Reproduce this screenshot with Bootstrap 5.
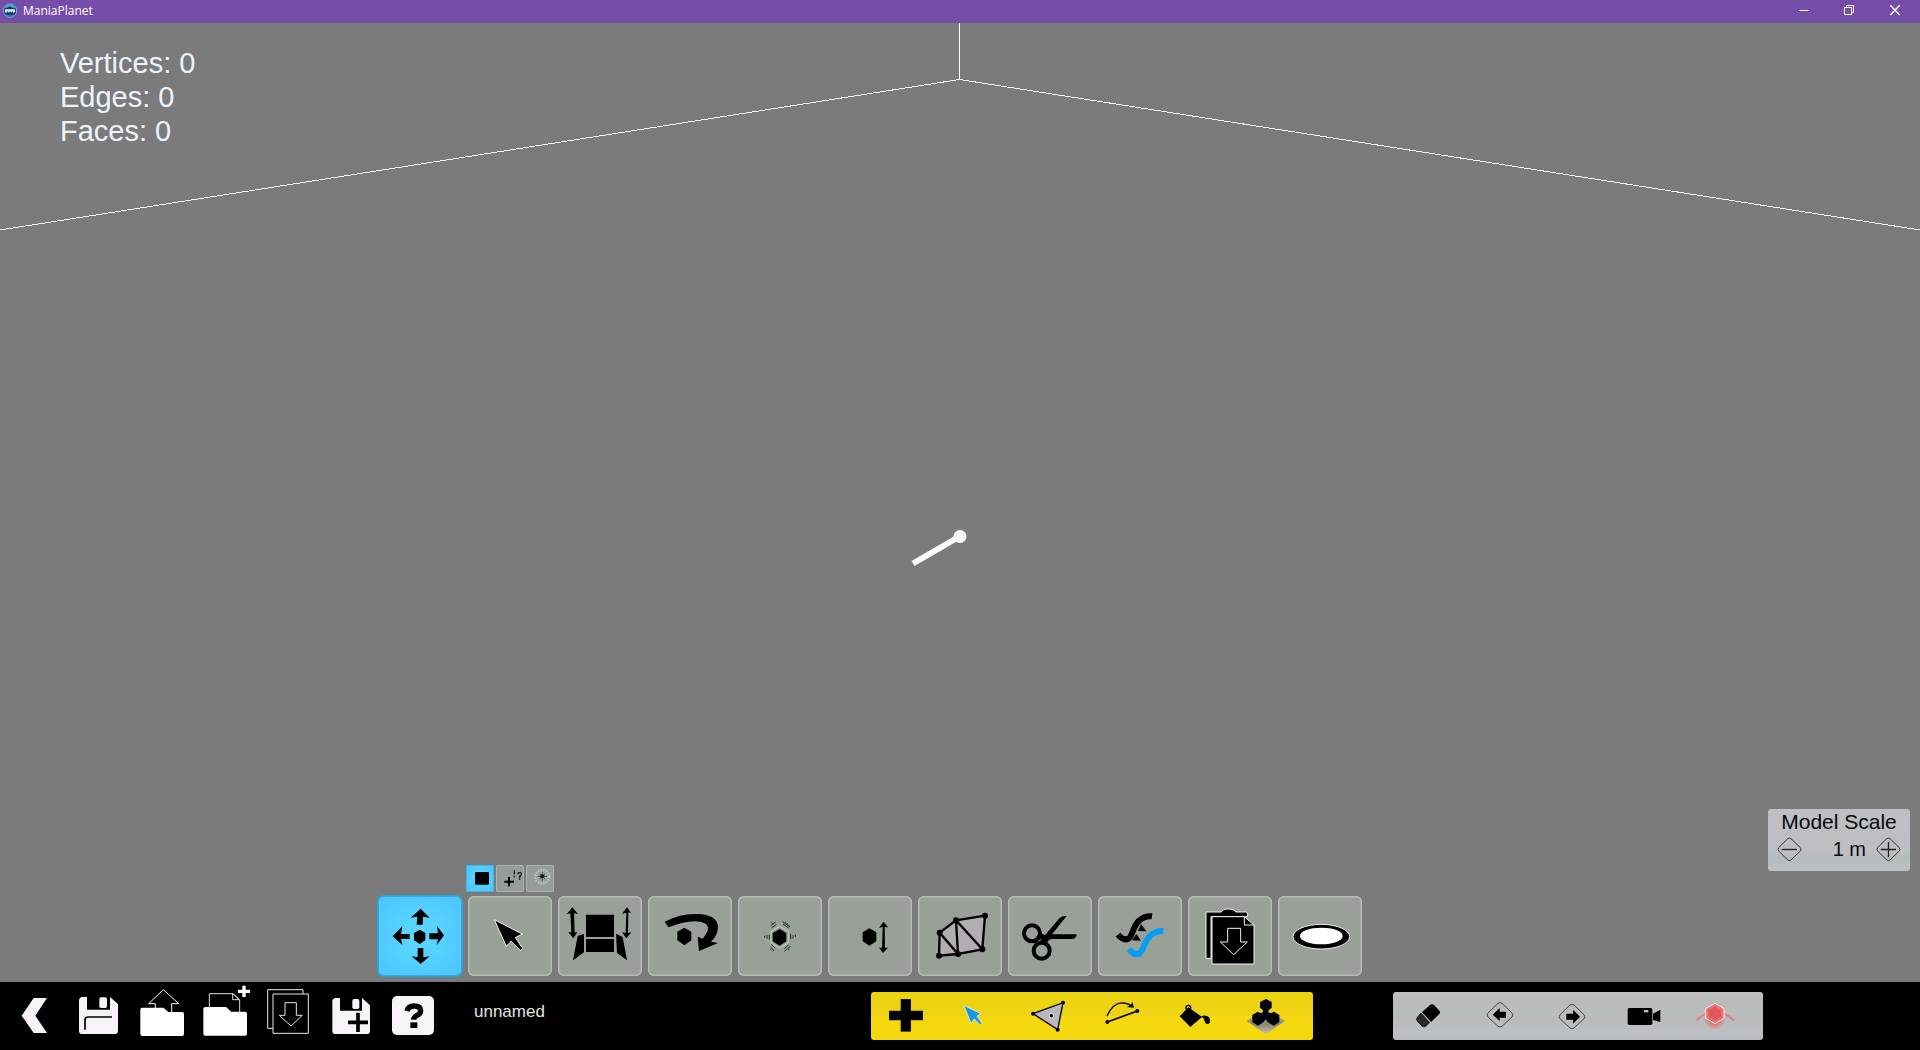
<!DOCTYPE html>
<html lang="en">
<head>
<meta charset="utf-8">
<meta name="viewport" content="width=device-width, initial-scale=1">
<title>ManiaPlanet</title>
<link href="https://cdn.jsdelivr.net/npm/bootstrap@5.3.0/dist/css/bootstrap.min.css" rel="stylesheet">
<style>
  body { font-family: "Liberation Sans", Arial, sans-serif; background: #7b7b7b; }
  svg { display: block; }
  button { color: inherit; }
  .titlebar { background: #744da9; height: 23px; font-family: "Open Sans", "Noto Sans", sans-serif; font-size: 12px; line-height: 22px; }
  .win-btn { width: 46px; height: 23px; border-radius: 0; }
  .win-btn svg { width: 46px; height: 23px; }
  .stage { background: #7b7b7b; min-height: 0; }
  .scene { z-index: 0; }
  .layer { z-index: 1; }
  .stats { padding: 23px 60px 0; font-size: 29px; line-height: 34px; color: #eef3fb; }
  .dock { padding: 0 10px 6px 378px; }
  .subtools { gap: 2px; margin: 0 0 4px 88px; }
  .sub { width: 28px; height: 27px; background: #969d97; border-radius: 2px; box-shadow: inset 0 0 0 1px #adb2ae; }
  .sub svg { width: 28px; height: 27px; }
  .tools { gap: 6px; }
  .tool { width: 84px; height: 80px; background: #98a098; border-radius: 6px; box-shadow: inset 0 0 0 1px #b4bab5, inset 0 0 0 2px #a9b0aa; }
  .tool svg { width: 84px; height: 80px; }
  .tool.active, .sub.active { background: radial-gradient(#5cd8ff, #4cc4ff); box-shadow: inset 0 0 0 1px #30a8e8, 0 0 0 1px #2ba2de; }
  .sub.active { box-shadow: inset 0 0 0 1px #3fb2f0; }
  .scale-panel { width: 142px; height: 62px; margin-bottom: 105px; border-radius: 3px; background: linear-gradient(#bebfc2, #bdbec1 72%, #b4bbbb 78%, #bcc0c3); color: #080808; }
  .scale-title { font-size: 21px; line-height: 26px; }
  .scale-row { font-size: 20px; line-height: 28px; padding: 0 9px; }
  .scale-row svg { width: 25px; height: 25px; }
  .scale-value { margin-right: 10px; }
  .bottombar { background: #000; height: 68px; }
  .files { padding-left: 3px; }
  .file-btn, .file-btn svg { width: 63px; height: 68px; }
  .docname { font-size: 17px; line-height: 24px; margin: 0 0 9px 30px; color: #e4e4e4; }
  .panels { gap: 80px; padding-right: 157px; }
  .strip { height: 48px; border-radius: 3px; }
  .strip-yellow { width: 442px; background: linear-gradient(#ebd20f, #eed414 50%, #f5d80f 51%, #f4d80e); }
  .strip-grey { width: 370px; background: linear-gradient(#c0c0c0, #bababa 24%, #b9bfbf 48%, #c0b8b9 50%, #bababc 56%, #bcc0c4 80%, #b8bdc0); }
  .strip-btn, .strip-btn svg { width: 72px; height: 48px; }
</style>
<script src="https://cdn.jsdelivr.net/npm/bootstrap@5.3.0/dist/js/bootstrap.bundle.min.js"></script>
</head>
<body>
<div class="d-flex flex-column vh-100 overflow-hidden">

  <header class="titlebar d-flex flex-shrink-0 text-white">
    <svg class="flex-shrink-0" width="23" height="23" viewBox="0 0 69 69" aria-hidden="true">
      <circle cx="30" cy="32" r="20" fill="#173f68" stroke="#7db9e6" stroke-width="3"/>
      <path d="M17 23q12-13 26 0" fill="none" stroke="#4ba4dc" stroke-width="6"/>
      <path d="M15 28h30v8l-4 3-3-6-3 5-5-4-5 4-3-5-3 6-4-3z" fill="#dcecf4"/>
      <path d="M18 44q12 9 24 0" fill="none" stroke="#3f8ac4" stroke-width="4"/>
    </svg>
    <span>ManiaPlanet</span>
    <div class="d-flex ms-auto">
      <button type="button" class="btn p-0 border-0 win-btn" aria-label="Minimize"><svg viewBox="66 0 138 69"><path d="M117 31.500h30" stroke="#fff" stroke-width="3"/></svg></button>
      <button type="button" class="btn p-0 border-0 win-btn" aria-label="Restore"><svg viewBox="204 0 138 69"><path d="M253.500 22.500h21v21h-21zM259.500 22.500v-6h21v21h-6" fill="none" stroke="#fff" stroke-width="3"/></svg></button>
      <button type="button" class="btn p-0 border-0 win-btn" aria-label="Close"><svg viewBox="342 0 138 69"><path d="M391 16l28 29M419 16l-28 29" stroke="#fff" stroke-width="4"/></svg></button>
    </div>
  </header>

  <main class="stage position-relative flex-grow-1 d-flex flex-column">
    <svg class="scene position-absolute top-0 start-0 w-100 h-100" viewBox="0 0 1920 959" preserveAspectRatio="xMidYMid slice" aria-label="3D view">
      <path d="M959.500 0V56.500M0 207L959.500 56.500L1920 207" fill="none" stroke="#fff" stroke-width="1" shape-rendering="crispEdges"/>
      <path d="M913 540.500L957 515" stroke="#fafafa" stroke-width="6"/>
      <circle cx="960" cy="513.500" r="6.500" fill="#fafafa"/>
    </svg>

    <div class="stats layer">
      <div>Vertices: 0</div>
      <div>Edges: 0</div>
      <div>Faces: 0</div>
    </div>

    <div class="dock layer mt-auto d-flex align-items-end justify-content-between">
      <div>
        <div class="subtools d-flex">
          <button type="button" class="btn p-0 border-0 sub active" aria-label="Square brush"><svg viewBox="288 16 84 81"><rect x="315" y="37" width="42" height="38" rx="4"/></svg></button>
          <button type="button" class="btn p-0 border-0 sub" aria-label="Add to selection"><svg viewBox="378 16 84 81"><path d="M403 66h29M417 52v28" stroke="#000" stroke-width="6"/><path d="M433 32v12M433 48v5M443 44q1-5 6-5 6 0 5 5 0 3-5 6v4M449 56v4" fill="none" stroke="#111" stroke-width="4"/></svg></button>
          <button type="button" class="btn p-0 border-0 sub" aria-label="Soft selection"><svg viewBox="468 16 84 81"><circle cx="517" cy="51" r="20" fill="none" stroke="#b9beb9" stroke-width="9" stroke-dasharray="5 3"/><circle cx="517" cy="51" r="11" fill="none" stroke="#a9afaa" stroke-width="4"/><circle cx="517" cy="50" r="6"/><path d="M517 36v28M503 50h28M508 42l18 16M526 42l-18 16" stroke="#222" stroke-width="2"/></svg></button>
        </div>
        <div class="tools d-flex">
          <button type="button" class="btn p-0 border-0 tool active" aria-label="Move"><svg viewBox="24 108 252 240"><path d="M152 146l27 27-20-3-1 24h-18l2-24-20 3zM152 312l27-23-19 3V264h-17v28l-18-3zM68 229l29-30-4 23h26v15H93l4 18zM222 226l-21-28 3 22h-26v18h26l-4 18zM149 209l17 10v22l-17 11-17-11v-22z"/></svg></button>
          <button type="button" class="btn p-0 border-0 tool" aria-label="Select"><svg viewBox="294 108 252 240"><path d="M373 179l84 43-21 11 22 32-6 7-28-29-15 16z" stroke="#f2f4f2" stroke-width="3"/><path d="M426 239l28 28" stroke="#000" stroke-width="7"/></svg></button>
          <button type="button" class="btn p-0 border-0 tool" aria-label="Mirror faces"><svg viewBox="564 108 252 240"><path d="M648 164h84v67h-84zM648 237h84v39h-84zM623 228l19-7v56l-33 24zM738 221l20 10 13 70-30-22zM607 142l17 20-12-2 2 57h8l-12 18-15-18h9l-3-57-11 3zM771 142l12 17-8-2-1 62 10-2-15 18-13-18 11 2 2-61-13 3z"/></svg></button>
          <button type="button" class="btn p-0 border-0 tool" aria-label="Rotate"><svg viewBox="834 108 252 240"><path d="M884 185q47-25 98-23 58 2 62 36 0 28-21 47l21 4-57 24-4-43 15 6q34-41-4-50-36-8-99 16z"/><path d="M943 203l21 12v26l-21 15-21-15v-26z"/></svg></button>
          <button type="button" class="btn p-0 border-0 tool" aria-label="Scale"><svg viewBox="24 33 252 240"><g fill="none" stroke="#1c301f" stroke-width="3"><path d="M149 124l26 15v35l-26 15-26-15v-35z" stroke="#bed4be"/><path d="M125 128l14-9M122 121l15-10M159 117l17 12M158 110l22 16M124 178l12 12M121 186l11 11M176 179l-13 12M182 184l-19 15M118 149v14M111 150v11M104 152v6M182 147v16M189 150v11M196 149v7"/><path d="M123 110l9 9M166 111l12 10M175 192l4 5M121 193l12 5" stroke-dasharray="4 3"/></g><path d="M149 132l20 12v25l-20 13-21-13v-25z"/></svg></button>
          <button type="button" class="btn p-0 border-0 tool" aria-label="Extrude"><svg viewBox="294 33 252 240"><path d="M418 130l21 12v27l-21 13-20-13v-27zM461 110l13 17-10-1 1 62h9l-15 16-12-16h9l2-62-11 2z"/></svg></button>
          <button type="button" class="btn p-0 border-0 tool" aria-label="Mesh edit"><svg viewBox="564 33 252 240"><path d="M629 143l49-37 87-14-8 101-73 14-57 5z" fill="#b1adb3" stroke="#000" stroke-width="7"/><path d="M629 143l55 64-6-101 79 87" fill="none" stroke="#000" stroke-width="7"/><circle cx="629" cy="143" r="9"/><circle cx="678" cy="106" r="9"/><circle cx="765" cy="92" r="9"/><circle cx="757" cy="193" r="9"/><circle cx="684" cy="207" r="9"/><circle cx="627" cy="212" r="9"/></svg></button>
          <button type="button" class="btn p-0 border-0 tool" aria-label="Cut"><svg viewBox="834 33 252 240"><g fill="none" stroke="#000" stroke-width="12"><circle cx="906" cy="145" r="24"/><circle cx="935" cy="197" r="24"/></g><path d="M922 151q15-8 23 0l43-51q7-8 22-7l-44 55h74q-1 13-13 14h-62q-12 1-16 20l-20-6q1-13 7-14-8 3-20-1z"/></svg></button>
          <button type="button" class="btn p-0 border-0 tool" aria-label="Bend"><svg viewBox="24 33 252 240"><path d="M84 149q15 18 30 13c13-5 13-35 33-55q18-16 39-13" fill="none" stroke="#000" stroke-width="18"/><path d="M153 117l16 22-25-1zM139 147l14 20-27-1z"/><path d="M118 192q13 20 28 14c16-7 14-35 35-54q16-16 39-14" fill="none" stroke="#079cf5" stroke-width="18"/></svg></button>
          <button type="button" class="btn p-0 border-0 tool" aria-label="Paste"><svg viewBox="294 33 252 240"><g stroke="#f1f3f1" stroke-width="3"><path d="M348 81h46q3-9 21-9t22 9h34q4 5 1 14H363v125h-15z"/><path d="M366 95h97l29 25v117H366z"/><path d="M463 95v25h29" fill="none"/><path d="M413 130h39v41h20l-41 38-40-38h22z"/></g></svg></button>
          <button type="button" class="btn p-0 border-0 tool" aria-label="Circle"><svg viewBox="564 33 252 240"><ellipse cx="694" cy="155" rx="85" ry="37" stroke="#eee" stroke-width="3"/><ellipse cx="694" cy="153" rx="64" ry="25" fill="#fff"/></svg></button>
        </div>
      </div>

      <section class="scale-panel flex-shrink-0" aria-label="Model Scale">
        <div class="scale-title text-center">Model Scale</div>
        <div class="scale-row d-flex align-items-center">
          <button type="button" class="btn p-0 border-0" aria-label="Decrease scale"><svg viewBox="0 0 75 75"><path d="M32 5q5-4 10 0l28 27q4 5 0 10L42 69q-5 4-10 0L5 42q-4-5 0-10z" fill="none" stroke="#333" stroke-width="3"/><path d="M14 37.500h46" stroke="#222" stroke-width="4"/></svg></button>
          <span class="scale-value ms-auto">1 m</span>
          <button type="button" class="btn p-0 border-0" aria-label="Increase scale"><svg viewBox="0 0 75 75"><path d="M32 5q5-4 10 0l28 27q4 5 0 10L42 69q-5 4-10 0L5 42q-4-5 0-10z" fill="none" stroke="#333" stroke-width="3"/><path d="M14 37.500h46M37.500 14v46" stroke="#222" stroke-width="4"/></svg></button>
        </div>
      </section>
    </div>
  </main>

  <footer class="bottombar d-flex align-items-center flex-shrink-0">
    <div class="files d-flex">
      <button type="button" class="btn p-0 border-0 file-btn" aria-label="Back"><svg viewBox="9 21 189 204"><path d="M101 69h40l-35 53 35 52h-40l-36-52z" fill="#f7f3f8"/></svg></button>
      <button type="button" class="btn p-0 border-0 file-btn" aria-label="Save"><svg viewBox="198 21 189 204"><path d="M246 66h15v38h69V66l24 21v80q0 10-10 10h-97q-10 0-10-10V77q0-9 9-11z" fill="#f7f3f8"/><rect x="298" y="67" width="23" height="32" rx="5" fill="#f7f3f8"/><path d="M255 164v-29q0-9 9-9h72" fill="none" stroke="#000" stroke-width="5"/></svg></button>
      <button type="button" class="btn p-0 border-0 file-btn" aria-label="Open"><svg viewBox="387 21 189 204"><path d="M466 103V86h-20l44-42 46 42h-21v26" fill="none" stroke="#fff" stroke-width="3"/><path d="M426 98h64l15 13h42q5 0 5 6v60q0 6-6 6H427q-6 0-6-6v-73q0-6 5-6z" fill="#fff"/></svg></button>
      <button type="button" class="btn p-0 border-0 file-btn" aria-label="New"><svg viewBox="576 21 189 204"><path d="M628 98V56h71l20 19v38M698 56v18h20z" fill="none" stroke="#ddd" stroke-width="3"/><path d="M714 49h36M732 32v34" stroke="#fff" stroke-width="10"/><path d="M616 96h62l16 14h41q6 0 6 6v60q0 6-6 6H616q-6 0-6-6v-74q0-6 6-6z" fill="#fff"/></svg></button>
      <button type="button" class="btn p-0 border-0 file-btn" aria-label="Import"><svg viewBox="765 21 189 204"><path d="M819 160h-16V44h106v13M819 57h106v118H819zM855 83h34v38h18l-34 32-35-32h17z" fill="none" stroke="#e4e8e4" stroke-width="3"/></svg></button>
      <button type="button" class="btn p-0 border-0 file-btn" aria-label="Save as"><svg viewBox="84 21 189 204"><path d="M136 69h14v38h66V69l24 22v76q0 10-10 10h-93q-10 0-10-10V79q0-8 9-10z" fill="#f7f3f8"/><rect x="187" y="72" width="21" height="30" rx="5" fill="#f7f3f8"/><path d="M174 142h60M204 113v58" stroke="#000" stroke-width="11"/></svg></button>
      <button type="button" class="btn p-0 border-0 file-btn" aria-label="Help"><svg viewBox="273 21 189 204"><rect x="306" y="63" width="126" height="117" rx="15" fill="#f7f3f8"/><path d="M351 108q4-15 21-15 20 0 20 14 0 9-11 14-10 5-10 13" fill="none" stroke="#000" stroke-width="16"/><path d="M361 142h21v17h-21z"/></svg></button>
    </div>
    <span class="docname">unnamed</span>

    <div class="panels d-flex ms-auto">
      <div class="strip strip-yellow d-flex">
        <button type="button" class="btn p-0 border-0 strip-btn" aria-label="Add"><svg viewBox="33 36 216 144"><path d="M122 57h31v35h36v29h-36v34h-31v-34H87V92h35z" stroke="#bba93a" stroke-width="1"/></svg></button>
        <button type="button" class="btn p-0 border-0 strip-btn" aria-label="Pick"><svg viewBox="249 36 216 144"><path d="M311 76l52 25-12 7 15 22-5 5-18-18-10 13z" fill="#179be0" stroke="#d5e5e6" stroke-width="3"/></svg></button>
        <button type="button" class="btn p-0 border-0 strip-btn" aria-label="Faces"><svg viewBox="465 36 216 144"><path d="M519 101l90-33-16 81z" fill="#b9b8bd" stroke="#000" stroke-width="4"/><circle cx="519" cy="101" r="6"/><circle cx="609" cy="68" r="6"/><circle cx="593" cy="149" r="6"/><circle cx="574" cy="107" r="8" fill="#d5d5d7"/><circle cx="574" cy="107" r="5"/></svg></button>
        <button type="button" class="btn p-0 border-0 strip-btn" aria-label="Edges"><svg viewBox="681 36 216 144"><path d="M741 108q20-42 49-39 17 2 26 10" fill="none" stroke="#000" stroke-width="4"/><path d="M817 65l5 18-22-2 13-5z"/><path d="M742 126l90-33" stroke="#000" stroke-width="5"/><circle cx="742" cy="126" r="6"/><circle cx="832" cy="93" r="6"/></svg></button>
        <button type="button" class="btn p-0 border-0 strip-btn" aria-label="Fill"><svg viewBox="897 36 216 144"><circle cx="985" cy="83" r="7" fill="none" stroke="#000" stroke-width="4"/><path d="M985 82l41 29-35 30-32-32zM985 82v22M1028 107q18-3 22 11 2 13-7 14-9-1-10-13-1-6-9-9z"/></svg></button>
        <button type="button" class="btn p-0 border-0 strip-btn" aria-label="Objects"><svg viewBox="1113 36 216 144"><defs><linearGradient id="plate" x2="0" y2="1"><stop offset="0" stop-color="#d2cf9d"/><stop offset=".6" stop-color="#88847c"/><stop offset="1" stop-color="#d0c6a0"/></linearGradient></defs><path d="M1217 86l58 37-58 40-57-40z" fill="url(#plate)"/><path d="M1218 57l17 9v17l-10 9v5l7 3 10-5 16 10v21l-17 11-18-11-6-8-6 8-17 11-17-11v-21l16-10 10 5 6-4v-5l-9-8V66z"/></svg></button>
      </div>
      <div class="strip strip-grey d-flex">
        <button type="button" class="btn p-0 border-0 strip-btn" aria-label="Erase"><svg viewBox="39 36 216 144"><path d="M126 96l24-21q6-5 12 0l15 16q6 6 0 12l-24 23z"/><path d="M123 99l26 29-12 11q-6 4-11-1l-14-14q-5-6 0-12z" fill="#292929" stroke="#000" stroke-width="2"/></svg></button>
        <button type="button" class="btn p-0 border-0 strip-btn" aria-label="Undo"><svg viewBox="255 36 216 144"><path d="M354 70q6-4 12 0l30 29q5 6 0 12l-30 28q-6 4-12 0l-30-28q-5-6 0-12z" fill="none" stroke="#444" stroke-width="3"/><path d="M338 104l21-20v11h19v18h-19v10z"/></svg></button>
        <button type="button" class="btn p-0 border-0 strip-btn" aria-label="Redo"><svg viewBox="471 36 216 144"><path d="M570 75q6-4 12 0l30 29q5 6 0 12l-30 28q-6 4-12 0l-30-28q-5-6 0-12z" fill="none" stroke="#444" stroke-width="3"/><path d="M600 110l-21-21v12h-20v18h20v12z"/></svg></button>
        <button type="button" class="btn p-0 border-0 strip-btn" aria-label="Camera"><svg viewBox="687 36 216 144"><rect x="743" y="84" width="74" height="51" rx="5"/><path d="M819 101l22-12v37l-22-6z"/><path d="M792 90h13v7h-13z" fill="#c2c2c2"/></svg></button>
        <button type="button" class="btn p-0 border-0 strip-btn" aria-label="Pivot"><svg viewBox="903 36 216 144"><defs><radialGradient id="glow"><stop offset="0" stop-color="#f0413c"/><stop offset="1" stop-color="#f0413c" stop-opacity="0"/></radialGradient></defs><ellipse cx="1004" cy="119" rx="34" ry="30" fill="url(#glow)"/><path d="M950 121q22-25 55-26 36 3 56 27" fill="none" stroke="#e48080" stroke-width="6"/><path d="M1005 70l27 16v29l-27 16-28-16V86z" fill="#e57273" stroke="#fbeaea" stroke-width="3"/><path d="M1005 80l18 11v18l-18 12-18-12V91z" fill="#e35557"/></svg></button>
      </div>
    </div>
  </footer>
</div>
</body>
</html>
